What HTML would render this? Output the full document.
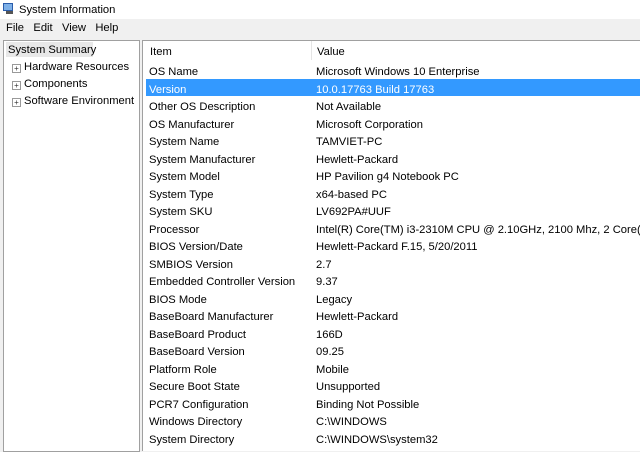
<!DOCTYPE html>
<html><head><style>
body{margin:0;width:640px;height:438px;overflow:hidden;background:#f0f0f0;font-family:"Liberation Sans",sans-serif;font-size:11.2px;color:#000;position:relative}
.t{position:absolute;white-space:nowrap}
#title{left:0;top:0;width:640px;height:19px;background:#fff}
#left{position:absolute;left:3px;top:40px;width:135px;height:410px;background:#fff;border:1px solid #a0a0a0}
#right{position:absolute;left:142px;top:40px;width:500px;height:410px;background:#fff;border-left:1px solid #a0a0a0;border-top:1px solid #a0a0a0}
.plus{position:absolute;width:7px;height:7px;border:1px solid #999;font-size:8px;line-height:7px;text-align:center;color:#333}
</style></head><body>
<div class="t" id="title"></div>
<svg style="position:absolute;left:3px;top:3px" width="12" height="11"><rect x="0" y="0" width="10" height="8" fill="#2a5caa"/><rect x="1" y="1" width="8" height="6" fill="#7db0e8"/><rect x="3" y="8" width="7" height="3" fill="#555"/></svg>
<div class="t" style="left:19px;top:4px">System Information</div>
<div class="t" style="left:6px;top:22px">File&nbsp;&nbsp;&nbsp;Edit&nbsp;&nbsp;&nbsp;View&nbsp;&nbsp;&nbsp;Help</div>
<div id="left">
<div style="position:absolute;left:2px;top:1px;width:87px;height:15px;background:#e8e8e8"></div>
<div class="t" style="left:4px;top:3px">System Summary</div>
<div class="plus" style="left:8px;top:23px">+</div><div class="t" style="left:20px;top:20px">Hardware Resources</div>
<div class="plus" style="left:8px;top:40px">+</div><div class="t" style="left:20px;top:37px">Components</div>
<div class="plus" style="left:8px;top:57px">+</div><div class="t" style="left:20px;top:54px">Software Environment</div>
</div>
<div id="right">
<div class="t" style="left:7px;top:5px">Item</div>
<div style="position:absolute;left:168px;top:0;width:1px;height:19px;background:#e5e5e5"></div>
<div class="t" style="left:174px;top:5px">Value</div>
</div>
<div style="position:absolute;left:146px;top:78.5px;width:494px;height:17px;background:#3399ff"></div>
<div style="position:absolute;left:0;top:2px">
<div class="t" style="left:149px;top:64px">OS Name</div><div class="t" style="left:316px;top:64px">Microsoft Windows 10 Enterprise</div>
<div class="t" style="left:149px;top:81.5px;color:#fff">Version</div><div class="t" style="left:316px;top:81.5px;color:#fff">10.0.17763 Build 17763</div>
<div class="t" style="left:149px;top:99px">Other OS Description</div><div class="t" style="left:316px;top:99px">Not Available</div>
<div class="t" style="left:149px;top:116.5px">OS Manufacturer</div><div class="t" style="left:316px;top:116.5px">Microsoft Corporation</div>
<div class="t" style="left:149px;top:134px">System Name</div><div class="t" style="left:316px;top:134px">TAMVIET-PC</div>
<div class="t" style="left:149px;top:151.5px">System Manufacturer</div><div class="t" style="left:316px;top:151.5px">Hewlett-Packard</div>
<div class="t" style="left:149px;top:169px">System Model</div><div class="t" style="left:316px;top:169px">HP Pavilion g4 Notebook PC</div>
<div class="t" style="left:149px;top:186.5px">System Type</div><div class="t" style="left:316px;top:186.5px">x64-based PC</div>
<div class="t" style="left:149px;top:204px">System SKU</div><div class="t" style="left:316px;top:204px">LV692PA#UUF</div>
<div class="t" style="left:149px;top:221.5px">Processor</div><div class="t" style="left:316px;top:221.5px">Intel(R) Core(TM) i3-2310M CPU @ 2.10GHz, 2100 Mhz, 2 Core(s), 4</div>
<div class="t" style="left:149px;top:239px">BIOS Version/Date</div><div class="t" style="left:316px;top:239px">Hewlett-Packard F.15, 5/20/2011</div>
<div class="t" style="left:149px;top:256.5px">SMBIOS Version</div><div class="t" style="left:316px;top:256.5px">2.7</div>
<div class="t" style="left:149px;top:274px">Embedded Controller Version</div><div class="t" style="left:316px;top:274px">9.37</div>
<div class="t" style="left:149px;top:291.5px">BIOS Mode</div><div class="t" style="left:316px;top:291.5px">Legacy</div>
<div class="t" style="left:149px;top:309px">BaseBoard Manufacturer</div><div class="t" style="left:316px;top:309px">Hewlett-Packard</div>
<div class="t" style="left:149px;top:326.5px">BaseBoard Product</div><div class="t" style="left:316px;top:326.5px">166D</div>
<div class="t" style="left:149px;top:344px">BaseBoard Version</div><div class="t" style="left:316px;top:344px">09.25</div>
<div class="t" style="left:149px;top:361.5px">Platform Role</div><div class="t" style="left:316px;top:361.5px">Mobile</div>
<div class="t" style="left:149px;top:379px">Secure Boot State</div><div class="t" style="left:316px;top:379px">Unsupported</div>
<div class="t" style="left:149px;top:396.5px">PCR7 Configuration</div><div class="t" style="left:316px;top:396.5px">Binding Not Possible</div>
<div class="t" style="left:149px;top:414px">Windows Directory</div><div class="t" style="left:316px;top:414px">C:\WINDOWS</div>
<div class="t" style="left:149px;top:431.5px">System Directory</div><div class="t" style="left:316px;top:431.5px">C:\WINDOWS\system32</div>
</div>
</body></html>
